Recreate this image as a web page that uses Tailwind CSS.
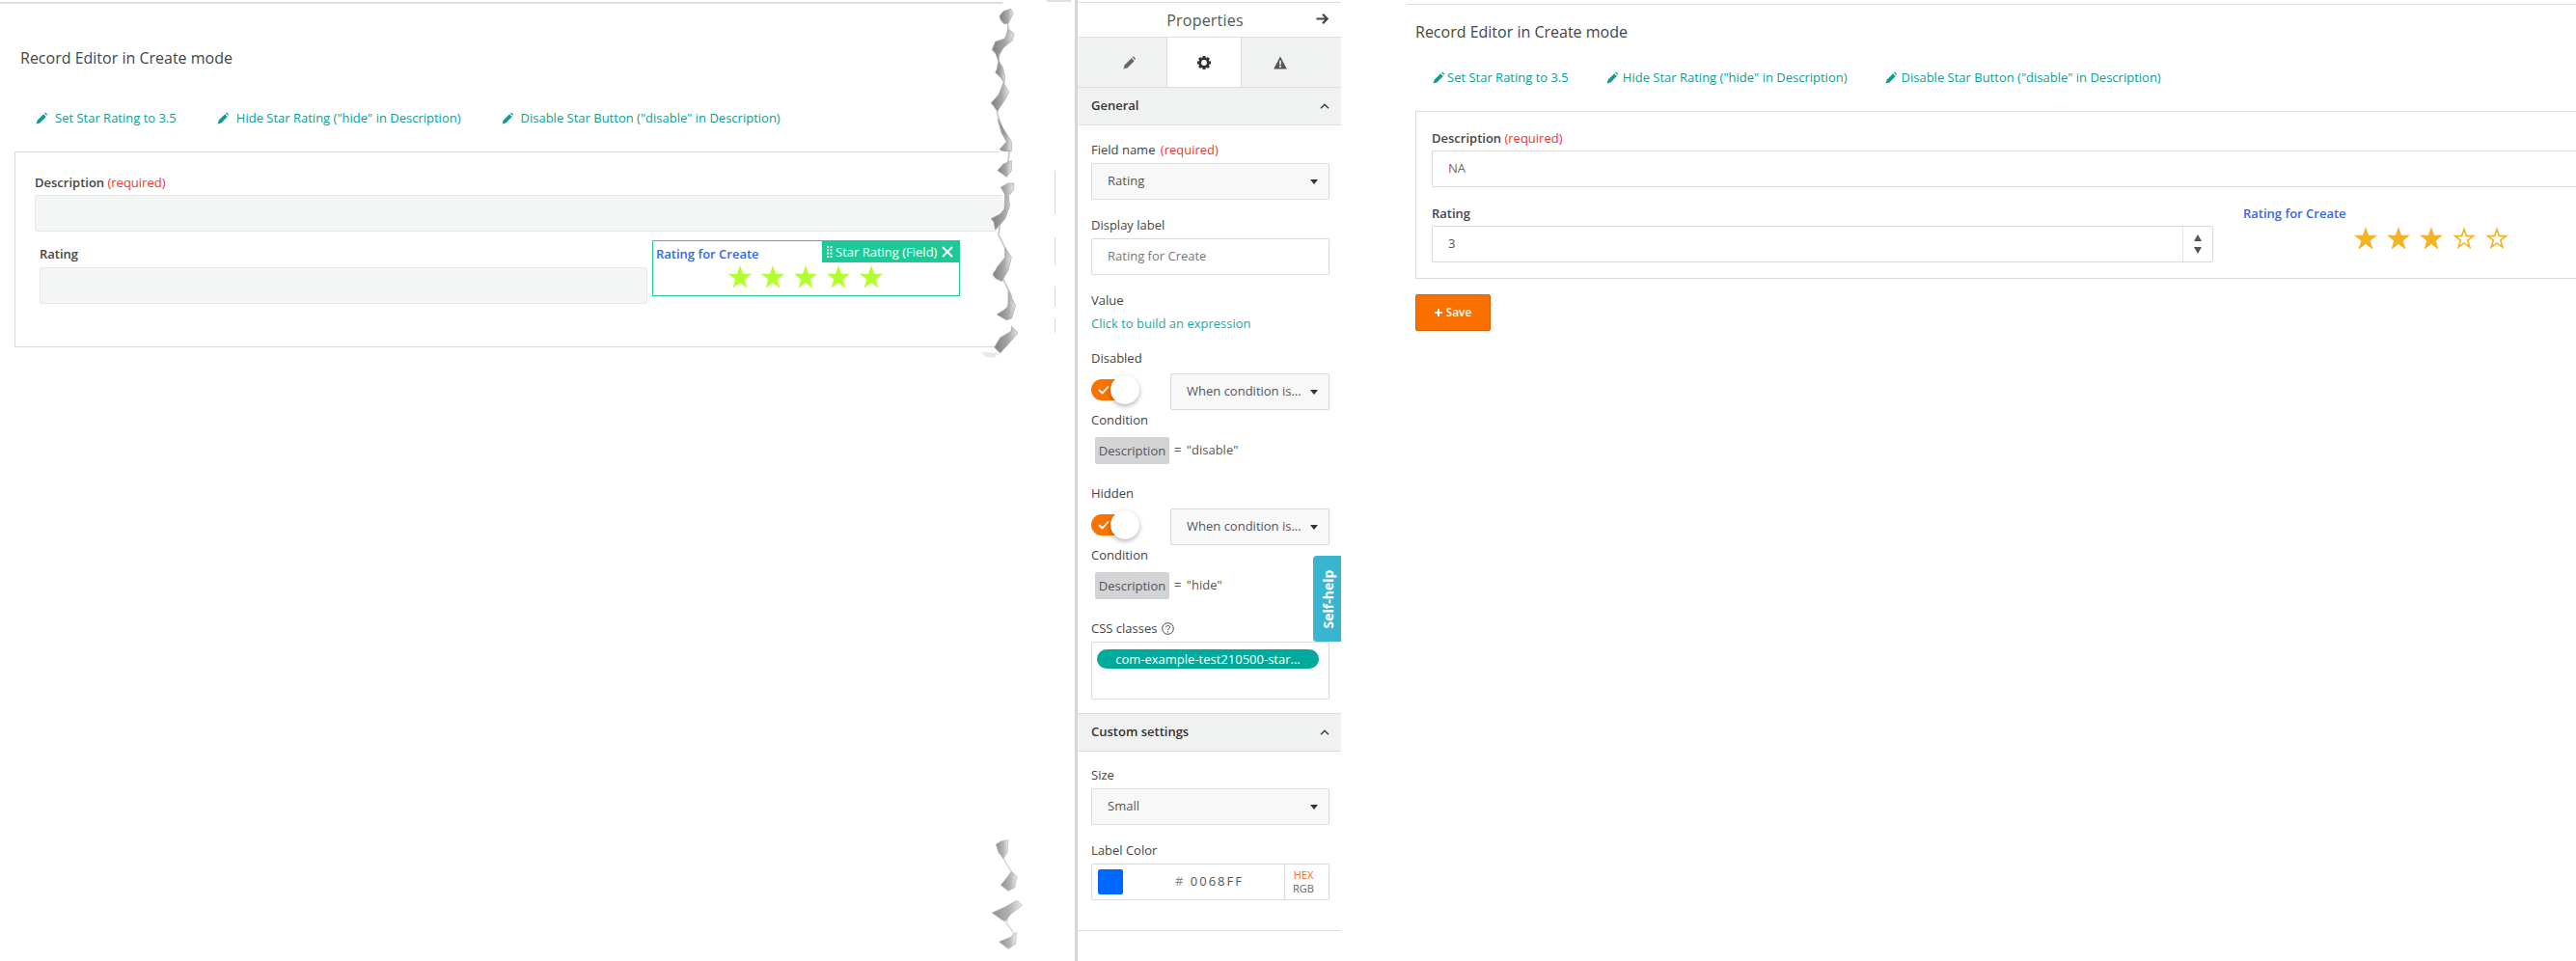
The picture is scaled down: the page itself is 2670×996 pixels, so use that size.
<!DOCTYPE html>
<html>
<head>
<meta charset="utf-8">
<script src="https://cdn.jsdelivr.net/npm/@tailwindcss/browser@4"></script>
</head>
<body class="bg-white">
<div class="flex w-[2670px] h-[996px] overflow-hidden bg-white font-['Open_Sans',sans-serif] text-[13px] text-[#444]">

  <!-- LEFT PANE -->
  <div class="relative w-[1114px] h-[996px] shrink-0">
    <div class="mt-[2px] w-[1040px] h-[2px] bg-[#ddd]"></div>
    <div class="ml-[21px] mt-[44px] h-[24px] leading-[24px] text-[16px] text-[#444]">Record Editor in Create mode</div>
    <div class="ml-[37px] mt-[40px] h-[20px] flex gap-[42px] text-[#0d9d92] text-[13px] leading-[20px]">
      <div class="flex items-center gap-[7px]"><svg class="w-[13px] h-[13px]" viewBox="0 0 24 24" fill="#0d9d92"><path d="M1 23l2-7L15 4l5 5L8 21z"/><path d="M16.500 2.500l2-1.500 4 4-1.500 2z"/></svg><span>Set Star Rating to 3.5</span></div>
      <div class="flex items-center gap-[7px]"><svg class="w-[13px] h-[13px]" viewBox="0 0 24 24" fill="#0d9d92"><path d="M1 23l2-7L15 4l5 5L8 21z"/><path d="M16.500 2.500l2-1.500 4 4-1.500 2z"/></svg><span>Hide Star Rating ("hide" in Description)</span></div>
      <div class="flex items-center gap-[7px]"><svg class="w-[13px] h-[13px]" viewBox="0 0 24 24" fill="#0d9d92"><path d="M1 23l2-7L15 4l5 5L8 21z"/><path d="M16.500 2.500l2-1.500 4 4-1.500 2z"/></svg><span>Disable Star Button ("disable" in Description)</span></div>
    </div>
    <div class="ml-[15px] mt-[25px] w-[1045px] h-[203px] border border-[#d9d9d9] pl-[20px] pt-[21px]">
      <div class="h-[20px] leading-[20px] font-semibold text-[13px] text-[#444]">Description <span class="font-normal text-[#f5341f]">(required)</span></div>
      <div class="mt-[3px] h-[38px] w-[1020px] bg-[#f4f6f5] border border-[#e6e8e7] rounded-[2px]"></div>
      <div class="flex mt-[9px] ml-[5px]">
        <div class="w-[630px] pt-[4px]">
          <div class="h-[20px] leading-[20px] font-semibold text-[#444]">Rating</div>
          <div class="mt-[4px] h-[38px] bg-[#f4f6f5] border border-[#e6e8e7] rounded-[2px]"></div>
        </div>
        <div class="relative ml-[5px] w-[319px] h-[58px] border border-[#1fc997]">
          <div class="pl-[3px] pt-[4px] h-[24px] leading-[18px] font-semibold text-[13px] text-[#2f67f5]">Rating for Create</div>
          <div class="absolute right-[-1px] top-[-1px] w-[143px] h-[23px] bg-[#1fc997] flex items-center pl-[5px] text-white text-[13px] leading-[20px]">
            <svg class="w-[6px] h-[12px] mr-[3px]" viewBox="0 0 6 12" fill="#fff"><rect x="0" y="0" width="2" height="2"/><rect x="3.500" y="0" width="2" height="2"/><rect x="0" y="3.300" width="2" height="2"/><rect x="3.500" y="3.300" width="2" height="2"/><rect x="0" y="6.600" width="2" height="2"/><rect x="3.500" y="6.600" width="2" height="2"/><rect x="0" y="10" width="2" height="2"/><rect x="3.500" y="10" width="2" height="2"/></svg>
            <span>Star Rating (Field)</span>
            <svg class="w-[12px] h-[12px] ml-[5px]" viewBox="0 0 12 12" stroke="#fff" stroke-width="2" fill="none"><path d="M1 1l10 10M11 1L1 11"/></svg>
          </div>
          <div class="flex ml-[78px] mt-[1px] gap-[10px]">
            <svg class="w-[24px] h-[24px]" viewBox="0 0 24 24" fill="#b2ff2c"><path d="M12 0l3 8.800h9l-7.200 5.600 2.600 9L12 18.100l-7.400 5.300 2.600-9L0 8.800h9z"/></svg>
            <svg class="w-[24px] h-[24px]" viewBox="0 0 24 24" fill="#b2ff2c"><path d="M12 0l3 8.800h9l-7.200 5.600 2.600 9L12 18.100l-7.400 5.300 2.600-9L0 8.800h9z"/></svg>
            <svg class="w-[24px] h-[24px]" viewBox="0 0 24 24" fill="#b2ff2c"><path d="M12 0l3 8.800h9l-7.200 5.600 2.600 9L12 18.100l-7.400 5.300 2.600-9L0 8.800h9z"/></svg>
            <svg class="w-[24px] h-[24px]" viewBox="0 0 24 24" fill="#b2ff2c"><path d="M12 0l3 8.800h9l-7.200 5.600 2.600 9L12 18.100l-7.400 5.300 2.600-9L0 8.800h9z"/></svg>
            <svg class="w-[24px] h-[24px]" viewBox="0 0 24 24" fill="#b2ff2c"><path d="M12 0l3 8.800h9l-7.200 5.600 2.600 9L12 18.100l-7.400 5.300 2.600-9L0 8.800h9z"/></svg>
          </div>
        </div>
      </div>
    </div>

    <!-- torn edge overlay -->
    <svg class="absolute left-[980px] top-0 w-[130px] h-[400px]" viewBox="0 0 390 1200">
      <defs><linearGradient id="g1" x1="0" x2="1" y1="0" y2="0"><stop offset="0" stop-color="#7f7f7f"/><stop offset="0.6" stop-color="#a8a8a8"/><stop offset="1" stop-color="#e6e6e6"/></linearGradient></defs>
      <polygon fill="#fff" points="180,0 168,50 190,80 145,155 165,190 155,225 183,258 142,320 165,370 168,465 162,530 172,582 183,650 142,680 155,715 185,770 147,853 195,905 160,978 205,1000 152,1080 170,1100 170,1200 390,1200 390,0"/>
      <g fill="none" stroke="#c6c6c6" stroke-width="5" stroke-linejoin="round">
        <polyline points="190,40 195,85 190,125 165,175 170,220 182,258 175,305 160,350 180,410 200,450 195,505 190,550"/>
        <polyline points="195,575 195,625 170,690 165,730 195,790 170,850 205,920 185,975"/>
        <polyline points="210,1020 190,1060 165,1090"/>
      </g>
      <g fill="url(#g1)" stroke="#a0a0a0" stroke-width="2" stroke-linejoin="round">
        <polygon points="168,50 180,35 203,28 210,42 195,72 182,74 172,62"/>
        <polygon points="196,90 213,105 208,125 178,150 165,170 165,190 155,165 145,155 155,130 185,120"/>
        <polygon points="165,190 178,210 185,240 183,255 170,240 155,225 160,215"/>
        <polygon points="180,258 197,285 185,310 165,340 160,345 150,330 142,320 165,295"/>
        <polygon points="162,370 180,400 205,440 205,470 180,470 168,465 190,440 175,415"/>
        <polygon points="205,500 205,530 190,550 162,530 180,510"/>
        <polygon points="172,582 195,570 212,570 212,590 195,610 200,640 185,680 155,715 150,690 142,680 170,665 183,650 185,605"/>
        <polygon points="185,770 205,800 195,840 175,875 155,865 147,853 165,825 185,800"/>
        <polygon points="195,905 218,950 205,990 190,995 160,978 195,955"/>
        <polygon points="205,1015 225,1035 195,1070 170,1098 152,1080 170,1050 205,1030"/>
      </g>
      <polygon fill="#e9e9e9" points="110,1095 170,1097 150,1112 125,1110"/>
      <rect x="315" y="0" width="75" height="6" fill="#e0e0e0"/>
    </svg>
    <svg class="absolute left-[980px] top-[840px] w-[130px] h-[156px]" viewBox="0 0 390 468">
      <defs><linearGradient id="g2" x1="0" x2="1" y1="0" y2="0"><stop offset="0" stop-color="#8f8f8f"/><stop offset="0.6" stop-color="#b5b5b5"/><stop offset="1" stop-color="#ececec"/></linearGradient></defs>
      <g fill="none" stroke="#d4d4d4" stroke-width="4">
        <polyline points="175,110 180,150 205,190 205,225"/>
        <polyline points="230,290 195,325 190,350 215,385 205,410"/>
      </g>
      <g fill="url(#g2)" stroke="#b0b0b0" stroke-width="2" stroke-linejoin="round">
        <polygon points="157,105 175,95 195,92 192,130 180,150 165,130"/>
        <polygon points="205,190 222,205 215,240 195,250 172,232 190,210"/>
        <polygon points="222,280 238,295 205,320 185,345 175,340 145,318 185,300"/>
        <polygon points="220,380 218,415 195,430 167,408 200,395"/>
      </g>
    </svg>
    <div class="absolute left-[1093px] top-[177px] w-px h-[45px] bg-[#d9d9d9]"></div>
    <div class="absolute left-[1093px] top-[246px] w-px h-[29px] bg-[#d9d9d9]"></div>
    <div class="absolute left-[1093px] top-[297px] w-px h-[21px] bg-[#d9d9d9]"></div>
    <div class="absolute left-[1093px] top-[330px] w-px h-[15px] bg-[#d9d9d9]"></div>
  </div>

  <!-- PROPERTIES PANEL -->
  <div class="relative w-[276px] h-[996px] shrink-0 border-l-[3px] border-[#d6d6d6]">
    <div class="mt-[2px] h-[1px] bg-[#ddd]"></div>
    <div class="relative h-[35px] flex items-center justify-center text-[16px] leading-[24px] text-[#555] font-medium tracking-[0.2px]">
      <span class="pr-[9px]">Properties</span>
      <svg class="absolute right-[13px] top-[10px] w-[13px] h-[13px]" viewBox="0 0 13 13" fill="none" stroke="#444" stroke-width="2.200"><path d="M0.500 6.500h11M7 1.800l4.700 4.700L7 11.200"/></svg>
    </div>
    <div class="flex h-[53px] bg-[#f0f2f1] border-y border-[#ddd]">
      <div class="w-[92px] flex items-center justify-center pl-[16px]">
        <svg class="w-[14px] h-[14px]" viewBox="0 0 24 24" fill="#666"><path d="M1 23l2-7L15 4l5 5L8 21z"/><path d="M16.500 2.500l2-1.500 4 4-1.500 2z"/></svg>
      </div>
      <div class="w-[78px] bg-white flex items-center justify-center border-x border-[#ddd]">
        <svg class="w-[14px] h-[14px]" viewBox="0 0 14 14"><circle cx="7" cy="7" r="4.300" fill="none" stroke="#333" stroke-width="2.800"/><g fill="#333"><rect x="5.500" y="0" width="3" height="3"/><rect x="5.500" y="11" width="3" height="3"/><rect x="0" y="5.500" width="3" height="3"/><rect x="11" y="5.500" width="3" height="3"/><rect x="5.500" y="0" width="3" height="3" transform="rotate(45 7 7)"/><rect x="5.500" y="11" width="3" height="3" transform="rotate(45 7 7)"/><rect x="0" y="5.500" width="3" height="3" transform="rotate(45 7 7)"/><rect x="11" y="5.500" width="3" height="3" transform="rotate(45 7 7)"/></g></svg>
      </div>
      <div class="flex-1 flex items-center justify-center pr-[24px]">
        <svg class="w-[14px] h-[14px]" viewBox="0 0 14 14"><path fill="#555" fill-rule="evenodd" d="M7 0.500L13.800 13.500H0.200zM6.100 4.700h1.800l-0.200 4.800H6.300zM6.100 10.300h1.800v1.700H6.100z"/></svg>
      </div>
    </div>
    <div class="h-[39px] bg-[#f0f2f1] border-b border-[#ddd] flex items-center justify-between pl-[14px] pr-[12px] font-semibold text-[#333]">
      <span>General</span>
      <svg class="w-[10px] h-[6px]" viewBox="0 0 10 6" fill="none" stroke="#444" stroke-width="1.600"><path d="M1 5.300L5 1.300l4 4"/></svg>
    </div>
    <div class="pl-[14px] pr-[12px] text-[#444]">
      <div class="mt-[15px] h-[20px] leading-[20px] font-medium">Field name <span class="font-normal text-[#f5341f] ml-[2px]">(required)</span></div>
      <div class="mt-[4px] h-[38px] bg-[#f8f8f8] border border-[#d9d9d9] rounded-[2px] flex items-center justify-between pl-[16px] pr-[11px] text-[#555]"><span>Rating</span><svg class="w-[8px] h-[5px]" viewBox="0 0 8 5" fill="#333"><path d="M0 0h8L4 5z"/></svg></div>
      <div class="mt-[16px] h-[20px] leading-[20px] font-medium">Display label</div>
      <div class="mt-[4px] h-[38px] bg-white border border-[#d9d9d9] rounded-[2px] flex items-center pl-[16px] text-[#777]">Rating for Create</div>
      <div class="mt-[16px] h-[20px] leading-[20px] font-medium">Value</div>
      <div class="mt-[4px] h-[20px] leading-[20px] text-[#1aa9a0]">Click to build an expression</div>
      <div class="mt-[16px] h-[20px] leading-[20px] font-medium">Disabled</div>
      <div class="mt-[6px] flex h-[38px]">
        <div class="relative w-[82px] h-[30px] mt-[2px]">
          <div class="absolute left-0 top-[4px] w-[36px] h-[22px] rounded-full bg-[#fb7200]"></div>
          <svg class="absolute left-[7px] top-[10px] w-[12px] h-[10px]" viewBox="0 0 12 10" fill="none" stroke="#fff" stroke-width="1.800"><path d="M1 5l3.500 3.500L11 1.500"/></svg>
          <div class="absolute left-[20px] top-0 w-[30px] h-[30px] rounded-full bg-white shadow-[0_2px_5px_rgba(0,0,0,0.3)]"></div>
        </div>
        <div class="flex-1 h-[38px] bg-[#f8f8f8] border border-[#d9d9d9] rounded-[2px] flex items-center justify-between pl-[16px] pr-[11px] text-[#555]"><span>When condition is...</span><svg class="w-[8px] h-[5px]" viewBox="0 0 8 5" fill="#333"><path d="M0 0h8L4 5z"/></svg></div>
      </div>
      <div class="h-[20px] leading-[20px] font-medium">Condition</div>
      <div class="mt-[8px] h-[28px] flex items-center ml-[4px]"><span class="w-[77px] h-[28px] leading-[28px] bg-[#d3d4d5] rounded-[2px] text-center text-[#555]">Description</span><span class="ml-[5px] text-[#555] [word-spacing:2px]">= "disable"</span></div>
      <div class="mt-[20px] h-[20px] leading-[20px] font-medium">Hidden</div>
      <div class="mt-[6px] flex h-[38px]">
        <div class="relative w-[82px] h-[30px] mt-[2px]">
          <div class="absolute left-0 top-[4px] w-[36px] h-[22px] rounded-full bg-[#fb7200]"></div>
          <svg class="absolute left-[7px] top-[10px] w-[12px] h-[10px]" viewBox="0 0 12 10" fill="none" stroke="#fff" stroke-width="1.800"><path d="M1 5l3.500 3.500L11 1.500"/></svg>
          <div class="absolute left-[20px] top-0 w-[30px] h-[30px] rounded-full bg-white shadow-[0_2px_5px_rgba(0,0,0,0.3)]"></div>
        </div>
        <div class="flex-1 h-[38px] bg-[#f8f8f8] border border-[#d9d9d9] rounded-[2px] flex items-center justify-between pl-[16px] pr-[11px] text-[#555]"><span>When condition is...</span><svg class="w-[8px] h-[5px]" viewBox="0 0 8 5" fill="#333"><path d="M0 0h8L4 5z"/></svg></div>
      </div>
      <div class="h-[20px] leading-[20px] font-medium">Condition</div>
      <div class="mt-[8px] h-[28px] flex items-center ml-[4px]"><span class="w-[77px] h-[28px] leading-[28px] bg-[#d3d4d5] rounded-[2px] text-center text-[#555]">Description</span><span class="ml-[5px] text-[#555] [word-spacing:2px]">= "hide"</span></div>
      <div class="mt-[20px] h-[20px] leading-[20px] font-medium flex items-center">CSS classes
        <svg class="w-[13px] h-[13px] ml-[5px]" viewBox="0 0 13 13" fill="none" stroke="#444" stroke-width="1"><circle cx="6.500" cy="6.500" r="5.800"/><path d="M4.700 5.200c0-2.400 3.800-2.400 3.800-0.100 0 1.500-2 1.500-2 3"/><path d="M6.500 9.200v1.200"/></svg>
      </div>
      <div class="mt-[4px] h-[60px] border border-[#d9d9d9] rounded-[2px] pl-[5px] pr-[10px] pt-[7px]">
        <div class="h-[20px] leading-[20px] rounded-full bg-[#00a99a] text-white text-center font-medium truncate">com-example-test210500-star...</div>
      </div>
    </div>
    <div class="mt-[14px] h-[40px] bg-[#f0f2f1] border-y border-[#ddd] flex items-center justify-between pl-[14px] pr-[12px] font-semibold text-[#333]">
      <span>Custom settings</span>
      <svg class="w-[10px] h-[6px]" viewBox="0 0 10 6" fill="none" stroke="#444" stroke-width="1.600"><path d="M1 5.300L5 1.300l4 4"/></svg>
    </div>
    <div class="pl-[14px] pr-[12px] text-[#444]">
      <div class="mt-[14px] h-[20px] leading-[20px] font-medium">Size</div>
      <div class="mt-[4px] h-[38px] bg-[#f8f8f8] border border-[#d9d9d9] rounded-[2px] flex items-center justify-between pl-[16px] pr-[11px] text-[#555]"><span>Small</span><svg class="w-[8px] h-[5px]" viewBox="0 0 8 5" fill="#333"><path d="M0 0h8L4 5z"/></svg></div>
      <div class="mt-[16px] h-[20px] leading-[20px] font-medium">Label Color</div>
      <div class="mt-[4px] h-[38px] border border-[#d9d9d9] rounded-[2px] flex items-center pl-[6px]">
        <div class="w-[26px] h-[26px] rounded-[2px] bg-[#0068ff]"></div>
        <div class="w-[167px] pl-[54px] text-[#555] tracking-[2px]"><span class="text-[#888]">#</span> 0068FF</div>
        <div class="h-[36px] w-[39px] border-l border-[#d9d9d9] flex flex-col items-center justify-center text-[11px] leading-[14px]"><span class="text-[#fb6a1a]">HEX</span><span class="text-[#666]">RGB</span></div>
      </div>
    </div>
    <div class="mt-[31px] h-px bg-[#ddd]"></div>
    <div class="absolute right-0 top-[576px] w-[29px] h-[89px] bg-[#3ab5cf] rounded-l-[4px] flex items-center justify-center pl-[3px]">
      <span class="block -rotate-90 whitespace-nowrap text-white font-bold text-[14px] leading-[16px]">Self-help</span>
    </div>
  </div>

  <!-- GAP -->
  <div class="w-[68px] shrink-0"></div>

  <!-- RIGHT PANE -->
  <div class="w-[1212px] h-[996px] shrink-0">
    <div class="mt-[4px] h-[1px] bg-[#ddd]"></div>
    <div class="ml-[9px] mt-[16px] h-[24px] leading-[24px] text-[16px] text-[#444]">Record Editor in Create mode</div>
    <div class="ml-[27px] mt-[25px] h-[20px] flex gap-[39px] text-[#0d9d92] text-[13px] leading-[20px]">
      <div class="flex items-center gap-[2px]"><svg class="w-[13px] h-[13px]" viewBox="0 0 24 24" fill="#0d9d92"><path d="M1 23l2-7L15 4l5 5L8 21z"/><path d="M16.500 2.500l2-1.500 4 4-1.500 2z"/></svg><span>Set Star Rating to 3.5</span></div>
      <div class="flex items-center gap-[4px]"><svg class="w-[13px] h-[13px]" viewBox="0 0 24 24" fill="#0d9d92"><path d="M1 23l2-7L15 4l5 5L8 21z"/><path d="M16.500 2.500l2-1.500 4 4-1.500 2z"/></svg><span>Hide Star Rating ("hide" in Description)</span></div>
      <div class="flex items-center gap-[4px]"><svg class="w-[13px] h-[13px]" viewBox="0 0 24 24" fill="#0d9d92"><path d="M1 23l2-7L15 4l5 5L8 21z"/><path d="M16.500 2.500l2-1.500 4 4-1.500 2z"/></svg><span>Disable Star Button ("disable" in Description)</span></div>
    </div>
    <div class="ml-[9px] mt-[25px] h-[174px] border-y border-l border-[#d9d9d9] pl-[16px] pt-[17px]">
      <div class="h-[20px] leading-[20px] font-semibold text-[#444]">Description <span class="font-normal text-[#f5341f]">(required)</span></div>
      <div class="mt-[3px] h-[38px] bg-white border-y border-l border-[#d9d9d9] rounded-l-[2px] flex items-center pl-[16px] text-[#667]">NA</div>
      <div class="flex mt-[17px]">
        <div class="w-[810px]">
          <div class="h-[20px] leading-[20px] font-semibold text-[#444]">Rating</div>
          <div class="mt-[3px] h-[38px] bg-white border border-[#d9d9d9] rounded-[2px] flex">
            <div class="flex-1 flex items-center pl-[16px] text-[#555]">3</div>
            <div class="w-[31px] border-l border-[#e5e5e5] flex flex-col items-center justify-center gap-[6px]">
              <svg class="w-[8px] h-[7px]" viewBox="0 0 8 7" fill="#555"><path d="M4 0l4 7H0z"/></svg>
              <svg class="w-[8px] h-[7px]" viewBox="0 0 8 7" fill="#555"><path d="M0 0h8L4 7z"/></svg>
            </div>
          </div>
        </div>
        <div class="ml-[31px]">
          <div class="h-[20px] leading-[20px] font-semibold text-[#2f67f5]">Rating for Create</div>
          <div class="flex ml-[115px] mt-[4px] gap-[10px]">
            <svg class="w-[24px] h-[24px]" viewBox="0 0 24 24" fill="#f2b324"><path d="M12 0l3 8.800h9l-7.200 5.600 2.600 9L12 18.100l-7.400 5.300 2.600-9L0 8.800h9z"/></svg>
            <svg class="w-[24px] h-[24px]" viewBox="0 0 24 24" fill="#f2b324"><path d="M12 0l3 8.800h9l-7.200 5.600 2.600 9L12 18.100l-7.400 5.300 2.600-9L0 8.800h9z"/></svg>
            <svg class="w-[24px] h-[24px]" viewBox="0 0 24 24" fill="#f2b324"><path d="M12 0l3 8.800h9l-7.200 5.600 2.600 9L12 18.100l-7.400 5.300 2.600-9L0 8.800h9z"/></svg>
            <svg class="w-[24px] h-[24px]" viewBox="0 0 24 24" fill="none" stroke="#f2b324" stroke-width="1.600"><path d="M12 2.500l2.400 7.100h7l-5.700 4.400 2.100 7.200L12 16.900l-5.800 4.300 2.100-7.200-5.700-4.400h7z"/></svg>
            <svg class="w-[24px] h-[24px]" viewBox="0 0 24 24" fill="none" stroke="#f2b324" stroke-width="1.600"><path d="M12 2.500l2.400 7.100h7l-5.700 4.400 2.100 7.200L12 16.900l-5.800 4.300 2.100-7.200-5.700-4.400h7z"/></svg>
          </div>
        </div>
      </div>
    </div>
    <div class="ml-[9px] mt-[16px] w-[78px] h-[38px] bg-[#f97000] border border-[#d96000] rounded-[2px] flex items-center justify-center gap-[4px] text-white text-[12px] font-semibold">
      <svg class="w-[8px] h-[8px]" viewBox="0 0 8 8" fill="#fff"><path d="M3 0h2v3h3v2H5v3H3V5H0V3h3z"/></svg><span>Save</span>
    </div>
  </div>
</div>
</body>
</html>
